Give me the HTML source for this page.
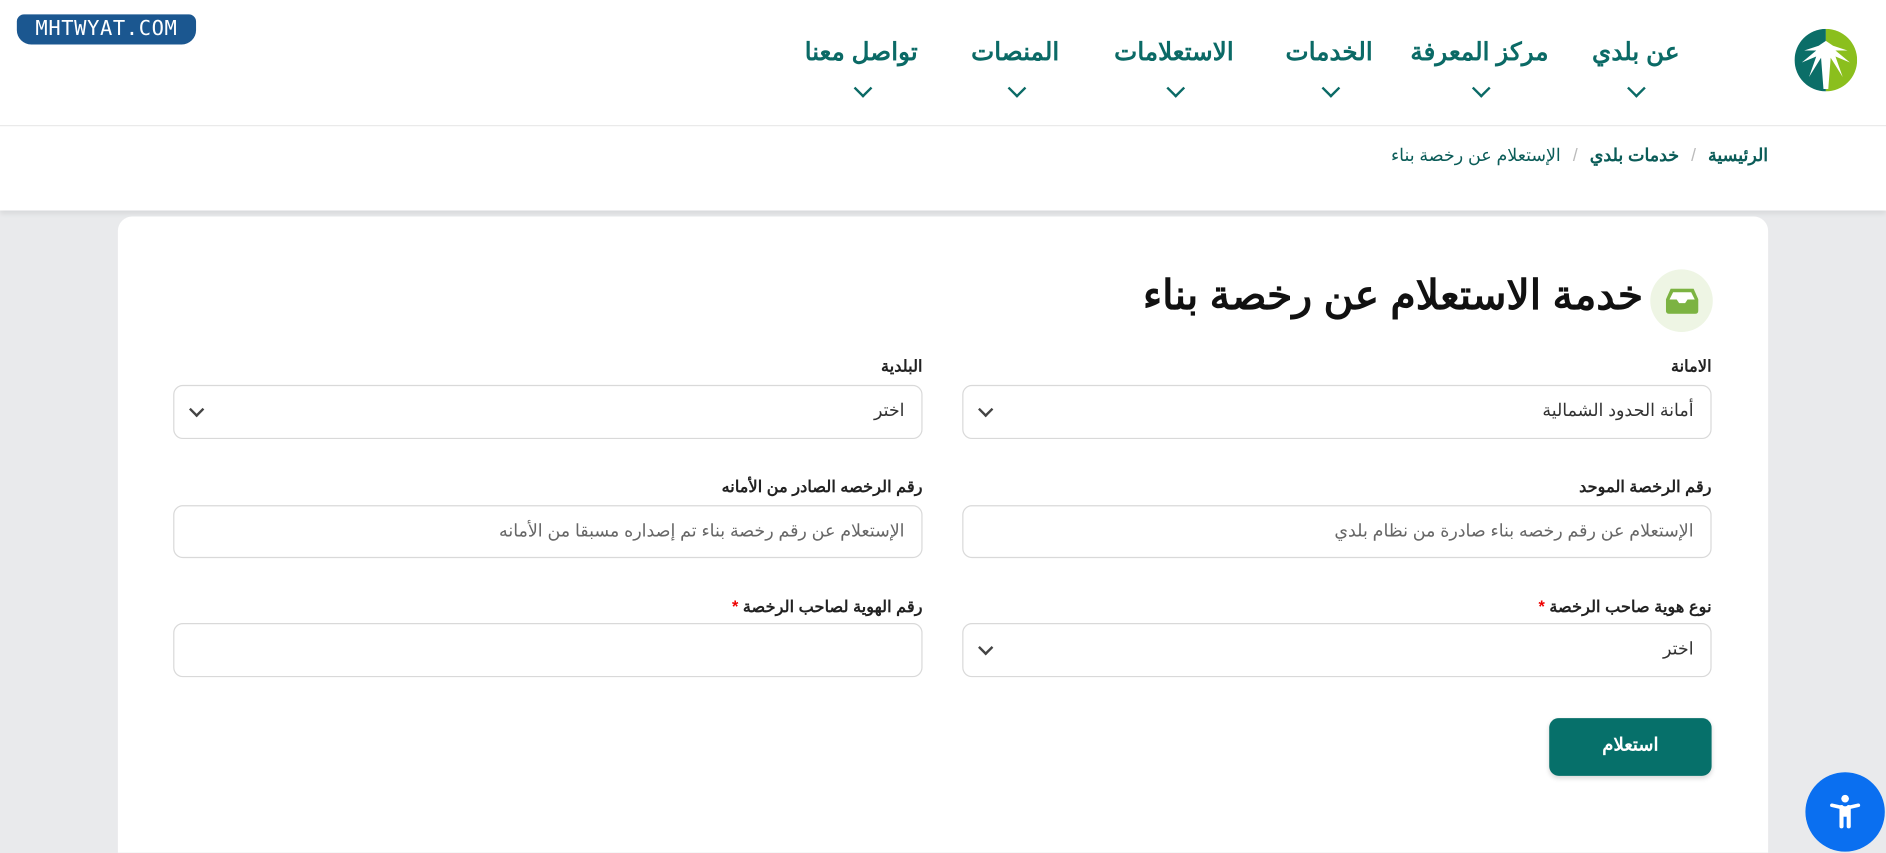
<!DOCTYPE html>
<html lang="ar"><head><meta charset="utf-8">
<style>
html,body{margin:0;padding:0;width:1886px;height:853px;overflow:hidden;background:#e9eaec}
#w{position:absolute;left:0;top:0;width:1568px;height:709px;transform:scale(1.20281);transform-origin:0 0;font-family:"Liberation Sans","Noto Sans CJK SC",sans-serif;background:#e9eaec;overflow:hidden}
.hdr{position:absolute;left:0;top:0;width:1568px;height:104px;background:#fff;border-bottom:1px solid #e8e8e8}
.bc{position:absolute;left:0;top:105px;width:1568px;height:70px;background:#fff;box-shadow:0 3px 4px rgba(0,0,0,.08)}
.nav{position:absolute;top:31px;font-size:20.5px;font-weight:bold;color:#0b6a66;transform:translateX(50%);white-space:nowrap;direction:rtl;text-align:center}
.chev{position:absolute;top:68px;width:9px;height:9px;border-right:2.5px solid #0b6a66;border-bottom:2.5px solid #0b6a66;transform:rotate(45deg)}
.card{position:absolute;left:98px;top:180px;width:1372px;height:529px;background:#fff;border-radius:12px 12px 0 0}
.lbl{position:absolute;font-size:13.5px;font-weight:bold;color:#222;direction:rtl;white-space:nowrap}
.fld{position:absolute;width:623px;height:44px;border:1px solid #d9d9d9;border-radius:8px;background:#fff;box-sizing:border-box}
.fld span{position:absolute;right:14px;top:13px;font-size:14.5px;color:#333;direction:rtl;white-space:nowrap}
.fld span.ph{color:#666}
.fld i{position:absolute;left:14px;top:15px;width:7px;height:7px;border-right:2px solid #444;border-bottom:2px solid #444;transform:rotate(45deg)}
.star{color:#e00}
</style></head><body><div id="w">
<div class="hdr">
 <div style="position:absolute;left:14px;top:12px;width:149px;height:25px;background:#1b5790;border-radius:6px 6px 12px 12px;color:#fff;font-family:'DejaVu Sans Mono','Liberation Mono',monospace;font-size:17px;line-height:25px;text-align:center;letter-spacing:0.5px">MHTWYAT.COM</div>
 <svg style="position:absolute;left:1492px;top:24px" width="52" height="52" viewBox="0 0 52 52">
  <path d="M26 0A26 26 0 0 0 26 52Z" fill="#0b6e68"/><path d="M26 0A26 26 0 0 1 26 52Z" fill="#8bbf1d"/>
  <path d="M26 10 L20 14 L8 18 L18 18 L6 28 L18 23 L12 40 L22 24 L24 50 L28 50 L30 24 L40 40 L34 23 L46 28 L34 18 L44 18 L32 14Z" fill="#fff"/>
 </svg>
 <div class="nav" style="right:208px">عن بلدي</div><div class="chev" style="left:1355px"></div>
 <div class="nav" style="right:338px">مركز المعرفة</div><div class="chev" style="left:1226px"></div>
 <div class="nav" style="right:463px">الخدمات</div><div class="chev" style="left:1101px"></div>
 <div class="nav" style="right:592px">الاستعلامات</div><div class="chev" style="left:972px"></div>
 <div class="nav" style="right:724px">المنصات</div><div class="chev" style="left:840px"></div>
 <div class="nav" style="right:852px">تواصل معنا</div><div class="chev" style="left:712px"></div>
</div>
<div class="bc"><div style="position:absolute;right:98px;top:17px;font-size:14.5px;direction:rtl;color:#0b5c58;white-space:nowrap"><b>الرئيسية</b> <span style="color:#bbb;margin:0 6px">/</span> <b>خدمات بلدي</b> <span style="color:#bbb;margin:0 6px">/</span> الإستعلام عن رخصة بناء</div></div>
<div class="card"></div>
<div style="position:absolute;left:1372px;top:224px;width:52px;height:52px;border-radius:50%;background:#eef5e4"></div>
<svg style="position:absolute;left:1385px;top:240px" width="27" height="21" viewBox="0 0 27 21"><path d="M4 0H23L27 9V18Q27 21 24 21H3Q0 21 0 18V9Z" fill="#7cb342"/><path d="M3 9H9L11 12H16L18 9H24L21 3H6Z" fill="#fff"/></svg>
<div style="position:absolute;right:202px;top:226px;font-size:34px;font-weight:bold;color:#111;direction:rtl;white-space:nowrap">خدمة الاستعلام عن رخصة بناء</div>

<div class="lbl" style="right:145px;top:297px">الامانة</div>
<div class="fld" style="left:800px;top:320px;height:45px"><span>أمانة الحدود الشمالية</span><i></i></div>
<div class="lbl" style="right:801px;top:297px">البلدية</div>
<div class="fld" style="left:144px;top:320px;height:45px"><span>اختر</span><i></i></div>

<div class="lbl" style="right:145px;top:397px">رقم الرخصة الموحد</div>
<div class="fld" style="left:800px;top:420px"><span class="ph">الإستعلام عن رقم رخصه بناء صادرة من نظام بلدي</span></div>
<div class="lbl" style="right:801px;top:397px">رقم الرخصه الصادر من الأمانه</div>
<div class="fld" style="left:144px;top:420px"><span class="ph">الإستعلام عن رقم رخصة بناء تم إصداره مسبقا من الأمانه</span></div>

<div class="lbl" style="right:145px;top:497px">نوع هوية صاحب الرخصة <span class="star">*</span></div>
<div class="fld" style="left:800px;top:518px;height:45px"><span>اختر</span><i></i></div>
<div class="lbl" style="right:801px;top:497px">رقم الهوية لصاحب الرخصة <span class="star">*</span></div>
<div class="fld" style="left:144px;top:518px;height:45px"></div>

<div style="position:absolute;left:1288px;top:597px;width:135px;height:48px;background:#06706a;border-radius:8px;color:#fff;font-size:15px;font-weight:bold;line-height:46px;text-align:center;box-shadow:0 2px 4px rgba(0,0,0,.15)">استعلام</div>

<div style="position:absolute;left:1501px;top:642px;width:66px;height:66px;border-radius:50%;background:#0a6ff0"></div>
<svg style="position:absolute;left:1520px;top:660px" width="28" height="30" viewBox="0 0 28 30"><circle cx="14" cy="4" r="3.2" fill="#fff"/><path d="M3 9.5L14 12L25 9.5" stroke="#fff" stroke-width="3" stroke-linecap="round" fill="none"/><path d="M11 11V27M17 11V27" stroke="#fff" stroke-width="3.4" stroke-linecap="round"/><rect x="11" y="11" width="6" height="8" fill="#fff"/></svg>
</div></body></html>
